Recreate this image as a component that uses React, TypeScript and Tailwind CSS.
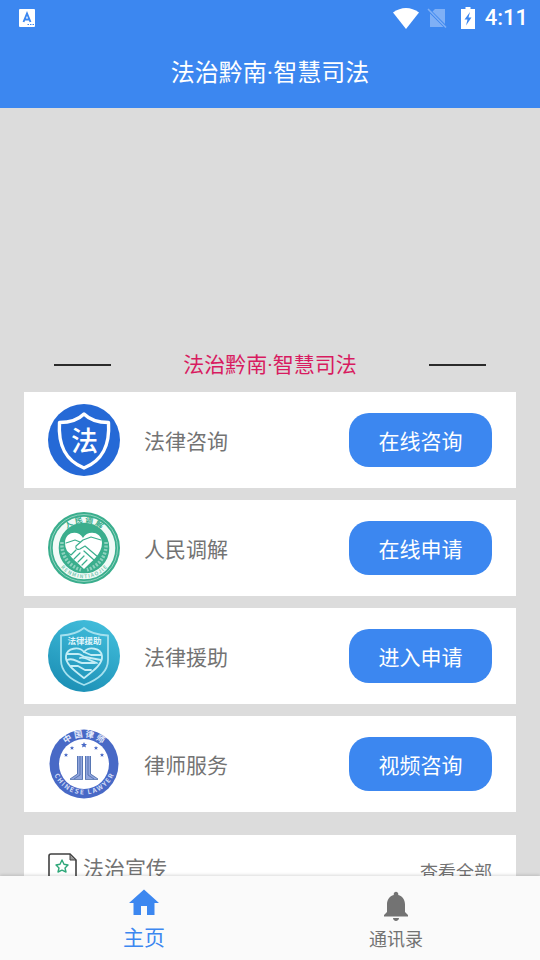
import React from 'react';

interface Service {
    label: string;
    action: string;
    icon: React.ReactNode;
}

const ConsultIcon = () => (
    <svg viewBox="0 0 72 72" className="w-full h-full" aria-hidden="true">
        <circle cx="36" cy="36" r="36" fill="#2569d6" />
        <path
            d="M36 10C31 15 22 18.500 11.500 18.500C10 41 17 56 36 64C55 56 62 41 60.500 18.500C50 18.500 41 15 36 10Z"
            fill="none"
            stroke="#fff"
            strokeWidth="3.400"
            strokeLinejoin="round"
        />
        <text x="36.500" y="46.500" textAnchor="middle" fontSize="27" fontWeight="500" fill="#fff">法</text>
    </svg>
);

const MediationIcon = () => (
    <svg viewBox="0 0 72 72" className="w-full h-full" aria-hidden="true">
        <defs>
            <path id="mediation-top" d="M10.500 36A25.500 25.500 0 0 1 61.500 36" />
            <path id="mediation-bottom" d="M5.800 36A30.200 30.200 0 0 0 66.200 36" />
        </defs>
        <circle cx="36" cy="36" r="36" fill="#3aae8d" />
        <circle cx="36" cy="36" r="33.500" fill="none" stroke="#a5dccb" strokeWidth=".8" />
        <circle cx="36" cy="36" r="28.300" fill="none" stroke="#f1faf7" strokeWidth="6" />
        <text fontSize="8" fontWeight="700" fill="#3aae8d">
            <textPath href="#mediation-top" startOffset="50%" textAnchor="middle">人 民 调 解</textPath>
        </text>
        <text fontSize="5" fontWeight="700" fill="#7cc9b3">
            <textPath href="#mediation-bottom" startOffset="50%" textAnchor="middle">R E N M I N   T I A O J I E</textPath>
        </text>
        <path d="M14 30C13 44 21 54 33 58M58 30C59 44 51 54 39 58" fill="none" stroke="#8fd2bf" strokeWidth="3.500" strokeDasharray="2 1.500" />
        <path d="M35 26C31 18 17 19 17 31C17 42 28 49 36 57C44 49 54 42 54 31C54 19 39 18 35 26Z" fill="#fff" />
        <g fill="none" stroke="#3aae8d" strokeWidth="1.200" strokeLinecap="round" strokeLinejoin="round">
            <path d="M53 28L43 25L35 28L28 34C27 37 30 38 32 37L37 34L50 45" />
            <path d="M18 31L27 28L32 30" />
            <path d="M19 40L23 43L28 38M26 47L32 41M30 50L36 44M34 53L39 48" />
            <path d="M36 39L46 48" />
        </g>
    </svg>
);

const AidIcon = () => (
    <svg viewBox="0 0 72 72" className="w-full h-full" aria-hidden="true">
        <defs>
            <linearGradient id="aid-fill" x1="0.700" y1="0" x2="0.300" y2="1">
                <stop offset="0" stopColor="#42bddb" />
                <stop offset="1" stopColor="#1b8fb5" />
            </linearGradient>
        </defs>
        <circle cx="36" cy="36" r="36" fill="url(#aid-fill)" />
        <path
            d="M36 8C31 12 23 15 13 15.500V40C13 53 23 60 36 65C49 60 60 53 60 40V15.500C49 15 41 12 36 8Z"
            fill="none"
            stroke="#a5e1ef"
            strokeWidth="1.800"
        />
        <text x="36.500" y="24" textAnchor="middle" fontSize="8.500" fontWeight="700" fill="#e1f6fb">法律援助</text>
        <g fill="none" stroke="#c3edf6" strokeWidth="1.800" strokeLinecap="round" strokeLinejoin="round">
            <path d="M36 32C31 26 19 28 18 36C17 44 27 51 36 58C45 51 55 44 54 36C53 28 41 26 36 32Z" />
            <path d="M19 34H30C33 34 34 36 37 37L53 40" />
            <path d="M19 40C26 37 28 42 34 43H47" />
            <path d="M36 32L43 35H53M32 38C36 36 42 41 49 43" />
            <path d="M23 46H30L37 50H43" />
        </g>
    </svg>
);

const STAR = 'M0 -3L.9 -1L3 -.9L1.400 .5L2 2.600L0 1.400L-2 2.600L-1.400 .5L-3 -.9L-.9 -1Z';

const LawyerIcon = () => (
    <svg viewBox="0 0 72 72" className="w-full h-full" aria-hidden="true">
        <defs>
            <path id="lawyer-top" d="M9 36A27 27 0 0 1 63 36" />
            <path id="lawyer-bottom" d="M3.500 34A32.500 32.500 0 0 0 68.500 34" />
        </defs>
        <circle cx="36" cy="36" r="34.500" fill="#4869c6" />
        <circle cx="36" cy="36" r="25" fill="#fff" />
        <text fontSize="8.500" fontWeight="700" fill="#e4eafa">
            <textPath href="#lawyer-top" startOffset="50%" textAnchor="middle">中 国 律 师</textPath>
        </text>
        <text fontSize="6.500" fontWeight="700" fill="#d5def6">
            <textPath href="#lawyer-bottom" startOffset="50%" textAnchor="middle">C H I N E S E &nbsp; L A W Y E R</textPath>
        </text>
        <g fill="#4869c6">
            <path d={STAR} transform="translate(36 17)" />
            <path d={STAR} transform="translate(24 20) scale(.7)" />
            <path d={STAR} transform="translate(48 20) scale(.7)" />
            <path d={STAR} transform="translate(18 27) scale(.7)" />
            <path d={STAR} transform="translate(54 27) scale(.7)" />
            <path d="M29 28H35V51H22L29 46Z" opacity=".6" />
            <path d="M37 28H43V46L50 51H37Z" opacity=".6" />
        </g>
        <path
            d="M29.500 28V46L22 51M32 28V47L26 51M34.500 28V51M42.500 28V46L50 51M40 28V47L46 51M37.500 28V51M22 51.500H35M37 51.500H50"
            fill="none"
            stroke="#4869a8"
            strokeWidth=".8"
        />
    </svg>
);

const services: Service[] = [
    { label: '法律咨询', action: '在线咨询', icon: <ConsultIcon /> },
    { label: '人民调解', action: '在线申请', icon: <MediationIcon /> },
    { label: '法律援助', action: '进入申请', icon: <AidIcon /> },
    { label: '律师服务', action: '视频咨询', icon: <LawyerIcon /> },
];

// The CJK middle dot is full width, so the dot takes a Latin font
const AppName = () => (
    <span>法治黔南<span className="font-[Roboto]">·</span>智慧司法</span>
);

const StatusBar = () => (
    <div className="flex h-9 items-center justify-between pl-[19px] pr-3">
        <svg viewBox="0 0 16 18" className="w-4 h-[18px]" aria-hidden="true">
            <rect width="16" height="18" rx="1" fill="#fff" />
            <path d="M4.500 13L8 4.500L11.500 13M5.800 10.500H10.200" fill="none" stroke="#3c87f0" strokeWidth="1.900" />
            <path d="M8.500 15.500H10M11 15.500H12.500M13.500 15.500H15" stroke="#3c87f0" strokeWidth="1.200" />
        </svg>
        <div className="flex items-center">
            <svg viewBox="0 0 26 21" className="w-[26px] h-[21px]" aria-hidden="true">
                <path d="M0 4.500C8 -1.500 18 -1.500 26 4.500L13 21Z" fill="#fff" />
            </svg>
            <svg viewBox="0 0 20 22" className="ml-2 w-5 h-[22px]" aria-hidden="true">
                <path d="M8 2H18V17L5.500 4.500ZM3 6.500L16.500 20H3Z" fill="#7fb0f6" />
                <path d="M1 2L19 20.500" stroke="#7fb0f6" strokeWidth="1.600" />
            </svg>
            <svg viewBox="0 0 14 22" className="ml-[14px] w-[14px] h-[22px]" aria-hidden="true">
                <path d="M4.500 0H9.500V2H14V22H0V2H4.500Z" fill="#fff" />
                <path d="M9 5L3.500 12.500H6.500L5 18.500L10.500 10.500H7.500Z" fill="#3c87f0" />
            </svg>
            <span className="ml-[10px] font-[Roboto] text-[22px] leading-7 font-medium">4:11</span>
        </div>
    </div>
);

const ServiceCard = ({ label, action, icon }: Service) => (
    <li className="flex h-24 items-center bg-white px-6">
        <div className="w-18 h-18 shrink-0">{icon}</div>
        <span className="ml-6 flex-1 pt-[2px] text-[21px] text-[#737373]">{label}</span>
        <button type="button" className="h-[54px] w-[143px] rounded-[20px] bg-[#3c87f0] pt-[2px] text-[21px] text-white">
            {action}
        </button>
    </li>
);

export default function App() {
    return (
        <div className="flex h-screen flex-col overflow-hidden bg-[#dcdcdc] font-['Noto_Sans_CJK_SC',sans-serif]">
            <header className="shrink-0 bg-[#3c87f0] text-white">
                <StatusBar />
                <h1 className="flex h-18 items-center justify-center text-[24px]"><AppName /></h1>
            </header>

            <main className="min-h-0 flex-1 overflow-hidden px-6">
                <div className="h-[230px]" />
                <div className="flex h-[54px] items-center justify-between px-[30px]">
                    <span className="h-[2px] w-[57px] bg-[#2b2b2b]" />
                    <h2 className="text-[21px] text-[#d81b60]"><AppName /></h2>
                    <span className="h-[2px] w-[57px] bg-[#2b2b2b]" />
                </div>
                <ul className="space-y-3">
                    {services.map((service) => (
                        <ServiceCard key={service.label} {...service} />
                    ))}
                </ul>
                <section className="mt-[23px] flex h-24 items-start bg-white px-6 pt-[18px]">
                    <svg viewBox="0 0 29 36" className="w-[29px] h-9" fill="none" aria-hidden="true">
                        <path d="M22 1H3Q1 1 1 3V33Q1 35 3 35H26Q28 35 28 33V7Z" stroke="#404040" strokeWidth="1.600" />
                        <path d="M22 1V7H28Z" fill="#999" stroke="#404040" />
                        <path d="M14 7L16 11.200L20 12L17 15L18 19L14 17.200L10 19L11 15L8 12L12 11.200Z" stroke="#2fa87a" strokeWidth="1.400" strokeLinejoin="round" />
                    </svg>
                    <h2 className="ml-[6px] flex-1 text-[21px] leading-7 text-[#737373]">法治宣传</h2>
                    <a href="#all" className="pt-1 text-[18px] leading-7 text-[#737373]">查看全部</a>
                </section>
            </main>

            <nav className="flex h-21 shrink-0 bg-[#fafafa] px-[18px] shadow-[0_-1px_3px_rgba(0,0,0,0.15)]">
                <a href="#home" className="flex flex-1 flex-col items-center pt-[9px] text-[#3c87f0]">
                    <svg viewBox="0 0 24 24" className="w-9 h-9" fill="currentColor" aria-hidden="true">
                        <path d="M10 20v-6h4v6h5v-8h3L12 3 2 12h3v8z" />
                    </svg>
                    <span className="text-[21px] leading-[30px]">主页</span>
                </a>
                <a href="#contacts" className="flex flex-1 flex-col items-center pt-3 text-[#737373]">
                    <svg viewBox="0 0 24 24" className="w-9 h-9" fill="currentColor" aria-hidden="true">
                        <path d="M12 22c1.100 0 2-.9 2-2h-4c0 1.100.9 2 2 2zm6-6v-5c0-3.070-1.640-5.640-4.500-6.320V4c0-.83-.67-1.500-1.500-1.500s-1.500.67-1.500 1.500v.68C7.630 5.360 6 7.920 6 11v5l-2 2v1h16v-1z" />
                    </svg>
                    <span className="text-[18px] leading-7">通讯录</span>
                </a>
            </nav>
        </div>
    );
}
